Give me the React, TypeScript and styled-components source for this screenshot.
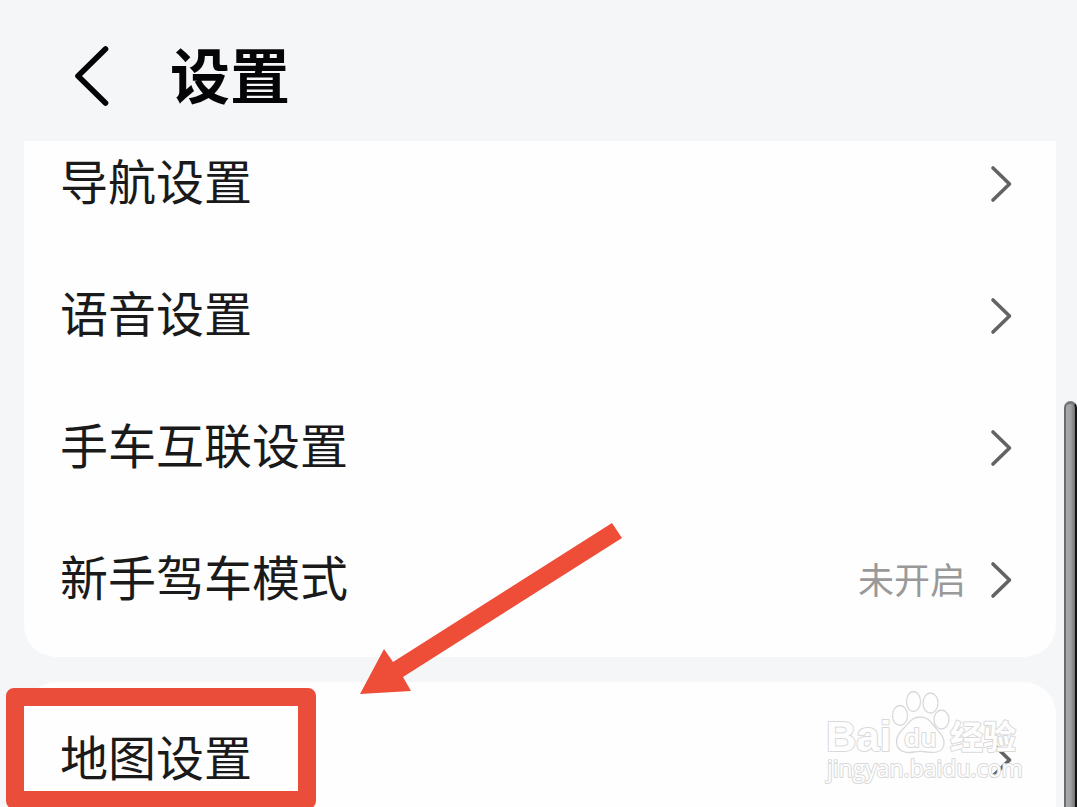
import React from "react";
import styled, { createGlobalStyle } from "styled-components";

const GlobalStyle = createGlobalStyle`
  * { box-sizing: border-box; }
  body {
    margin: 0;
    background: #f5f6f8;
    font-family: "Noto Sans CJK SC", sans-serif;
  }
`;

const Page = styled.div`
  position: relative;
  height: 100vh;
  overflow: hidden;
`;

const Header = styled.header`
  display: flex;
  align-items: center;
  gap: 60px;
  height: 141px;
  padding: 10px 72px 0;
`;

const BackButton = styled.button`
  display: flex;
  margin: 0;
  padding: 0;
  border: 0;
  background: none;
  color: #050507;
`;

const Title = styled.h1`
  margin: 0;
  font-size: 60px;
  line-height: 88px;
  font-weight: 700;
  color: #050507;
  padding-bottom: 6px;
`;

const Main = styled.main`
  display: flex;
  flex-direction: column;
  gap: 25px;
  padding: 0 21px 0 24px;
`;

const ScrolledCard = styled.section`
  overflow: hidden;
  background: #fefefe;
  border-radius: 0 0 32px 32px;
`;

const Card = styled.section`
  position: relative;
  padding: 12px 0;
  background: #fefefe;
  border-radius: 32px;
`;

const List = styled.div<{ $scrolled?: number }>`
  display: flex;
  flex-direction: column;
  margin-top: ${(p) => -(p.$scrolled ?? 0)}px;
  padding-bottom: ${(p) => (p.$scrolled ? 11 : 0)}px;
`;

const Row = styled.button`
  display: flex;
  align-items: center;
  gap: 24px;
  width: 100%;
  height: 132px;
  padding: 0 42px 0 36px;
  border: 0;
  background: none;
  font-family: inherit;
  text-align: left;
`;

const Label = styled.span`
  flex: 1;
  font-size: 48px;
  line-height: 72px;
  padding-bottom: 10px;
  color: #1a1a1a;
`;

const Status = styled.span`
  font-size: 36px;
  line-height: 54px;
  padding-bottom: 4px;
  color: #999;
`;

const Highlight = styled.div`
  position: absolute;
  left: -18px;
  top: 6px;
  width: 310px;
  height: 121px;
  border: 18px solid #ea4e3a;
  border-radius: 8px;
  pointer-events: none;
`;

const Arrow = styled.svg`
  position: absolute;
  left: 360px;
  top: 522px;
  pointer-events: none;
`;

const Watermark = styled.svg`
  position: absolute;
  right: 32px;
  top: 6px;
  pointer-events: none;

  text {
    paint-order: stroke;
    stroke-width: 2px;
  }
`;

const Scrollbar = styled.div`
  position: absolute;
  right: 0;
  top: 401px;
  bottom: -12px;
  width: 13px;
  border: 2px solid #6d6d6f;
  border-top: 3px solid #777;
  border-right-color: #151515;
  border-radius: 7px;
  background: linear-gradient(90deg, #aaa, #a2a2a2 50%, #747474);
`;

const Chevron = () => (
  <svg width="24" height="38" viewBox="0 0 24 38" fill="none" aria-hidden="true">
    <path d="M3 3L19.5 19L3 35" stroke="#636363" strokeWidth="3.6" strokeLinecap="round" strokeLinejoin="round" />
  </svg>
);

const SettingRow = ({ label, status }: { label: string; status?: string }) => (
  <Row type="button">
    <Label>{label}</Label>
    {status && <Status>{status}</Status>}
    <Chevron />
  </Row>
);

const BaiduMark = () => (
  <Watermark width="204" height="100" viewBox="820 688 204 100" aria-label="Baidu">
    <g fill="#fefefe" stroke="#d9d9d9" strokeWidth="1.3" strokeLinejoin="round">
      <ellipse cx="900" cy="715.5" rx="7.5" ry="10" />
      <ellipse cx="913.5" cy="701.5" rx="7" ry="10" />
      <ellipse cx="930.5" cy="703" rx="7.5" ry="10" />
      <ellipse cx="941.5" cy="719.5" rx="7.5" ry="9.5" />
      <path d="M920 717C912 717 909 723 904 728C899 733 895 738 897 745C899 753 909 753 914 752C919 751 922 751 927 752C934 753 943 753 944 744C945 737 939 732 935 727C931 722 928 717 920 717Z" />
      <text x="826" y="751" fontFamily="Liberation Sans, sans-serif" fontSize="42" fontWeight="700">Bai</text>
      <text x="904" y="747" fontFamily="Open Sans, sans-serif" fontSize="26" fontWeight="600">du</text>
      <text x="950" y="749" fontFamily="Noto Sans CJK SC, sans-serif" fontSize="33" fontWeight="700">经验</text>
      <text x="827" y="777" fontFamily="Open Sans, sans-serif" fontSize="23" fontWeight="400">jingyan.baidu.com</text>
    </g>
  </Watermark>
);

export default function App() {
  return (
    <Page>
      <GlobalStyle />
      <Header>
        <BackButton type="button" aria-label="返回">
          <svg width="38" height="62" viewBox="0 0 38 62" fill="none" aria-hidden="true">
            <path d="M33.5 4L6 31L33.5 58" stroke="currentColor" strokeWidth="5.6" strokeLinecap="round" strokeLinejoin="round" />
          </svg>
        </BackButton>
        <Title>设置</Title>
      </Header>
      <Main>
        <ScrolledCard>
          <List $scrolled={23}>
            <SettingRow label="导航设置" />
            <SettingRow label="语音设置" />
            <SettingRow label="手车互联设置" />
            <SettingRow label="新手驾车模式" status="未开启" />
          </List>
        </ScrolledCard>
        <Card>
          <List>
            <SettingRow label="地图设置" />
          </List>
          <Highlight />
          <BaiduMark />
        </Card>
      </Main>
      <Arrow width="262" height="173" viewBox="360 522 262 173" aria-hidden="true">
        <path d="M612 523L622 538L403 677L411 691L360 694L384 649L393 662Z" fill="#ee4d38" />
      </Arrow>
      <Scrollbar />
    </Page>
  );
}
